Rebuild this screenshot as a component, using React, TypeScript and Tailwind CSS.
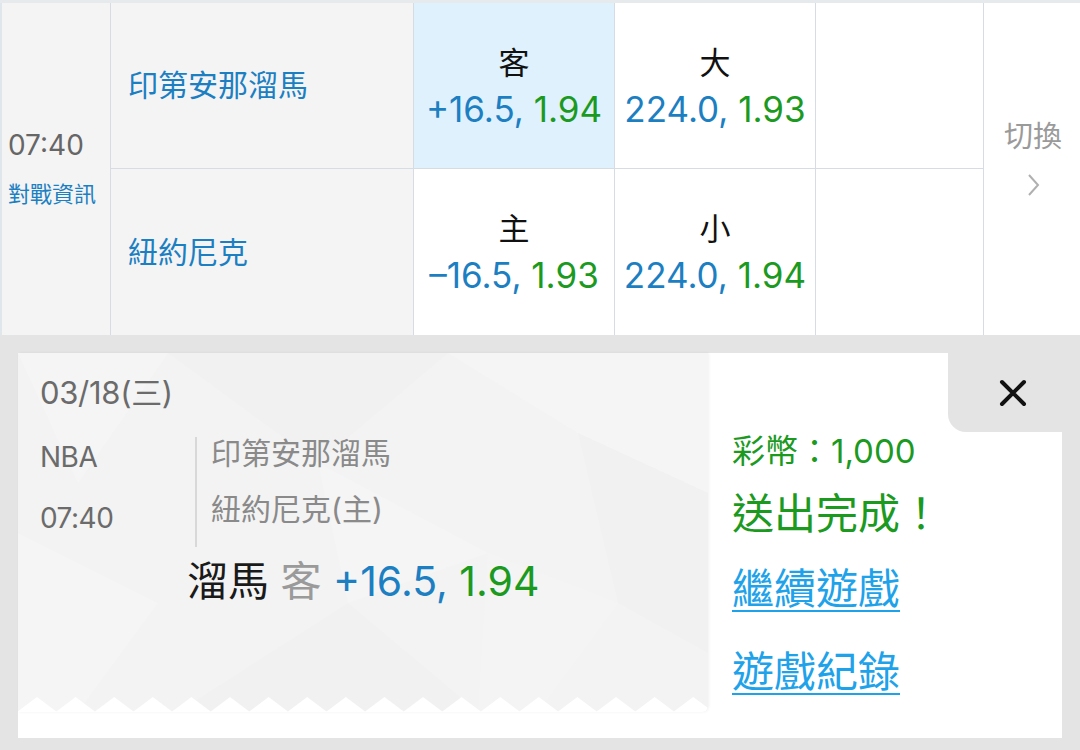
import React from 'react';

const font = { fontFamily: 'Inter, "Noto Sans CJK TC", sans-serif' };

type Odd = { label: string; line: string; price: string; active?: boolean };

const rows: { team: string; hdp: Odd; ou: Odd }[] = [
  {
    team: '印第安那溜馬',
    hdp: { label: '客', line: '+16.5', price: '1.94', active: true },
    ou: { label: '大', line: '224.0', price: '1.93' },
  },
  {
    team: '紐約尼克',
    hdp: { label: '主', line: '–16.5', price: '1.93' },
    ou: { label: '小', line: '224.0', price: '1.94' },
  },
];

function OddCell({ odd, last }: { odd: Odd; last?: boolean }) {
  return (
    <div
      className={`flex flex-col items-center justify-center pt-[2px] border-r border-[#d5dce3] ${last ? '' : 'border-b'} ${
        odd.active ? 'bg-[#dff1fc]' : 'bg-white'
      }`}
    >
      <span className="text-[31px] leading-[44px] text-[#111]">{odd.label}</span>
      <span className="text-[35px] leading-[48px]">
        <span className="text-[#1c7fc2]">{odd.line}, </span>
        <span className="text-[#1b9a1f]">{odd.price}</span>
      </span>
    </div>
  );
}

export default function App() {
  return (
    <div className="w-[1080px] h-[750px] bg-[#e4e4e4] overflow-hidden" style={font}>
      {/* odds table */}
      <div className="border-t-[3px] border-[#e6eaed] bg-white">
        <div className="grid grid-cols-[109px_303px_201px_201px_168px_98px] grid-rows-[166px_166px] border-l-[2px] border-[#dfe6ec]">
          <div className="row-span-2 flex flex-col justify-center pl-[6px] pb-[2px] bg-[#f4f4f4] border-r border-[#d5dce3]">
            <span className="text-[28px] leading-[34px] text-[#666]">07:40</span>
            <span className="mt-[18px] text-[22px] leading-[28px] text-[#1c7fc2]">對戰資訊</span>
          </div>
          {rows.map((r, i) => (
            <React.Fragment key={r.team}>
              <div
                className={`flex items-center pl-[17px] bg-[#f4f4f4] border-r border-[#d5dce3] ${
                  i === 0 ? 'border-b' : ''
                }`}
                style={{ gridRow: i + 1, gridColumn: 2 }}
              >
                <span className="text-[30px] text-[#1c7fc2]">{r.team}</span>
              </div>
              <div style={{ gridRow: i + 1, gridColumn: 3 }} className="grid">
                <OddCell odd={r.hdp} last={i === 1} />
              </div>
              <div style={{ gridRow: i + 1, gridColumn: 4 }} className="grid">
                <OddCell odd={r.ou} last={i === 1} />
              </div>
              <div
                style={{ gridRow: i + 1, gridColumn: 5 }}
                className={`bg-white border-r border-[#d5dce3] ${i === 0 ? 'border-b' : ''}`}
              />
            </React.Fragment>
          ))}
          <div
            className="row-span-2 flex flex-col items-center justify-center pb-[22px] bg-white"
            style={{ gridRow: '1 / span 2', gridColumn: 6 }}
          >
            <span className="text-[29px] leading-[38px] text-[#9a9a9a]">切換</span>
            <svg width="22" height="26" viewBox="0 0 22 26" className="mt-[16px]">
              <path d="M7 3 L16 13 L7 23" fill="none" stroke="#b0b0b0" strokeWidth="2" />
            </svg>
          </div>
        </div>
      </div>

      {/* confirmation panel */}
      <div className="mx-[18px] mt-[18px] h-[385px] flex bg-white">
        <div className="w-[690px] flex flex-col">
          <div className="relative h-[359px] bg-[#f3f3f3] rounded-br-[6px] shadow-[1px_0_3px_rgba(0,0,0,0.06)] overflow-hidden">
            <svg className="absolute inset-0" width="690" height="359" viewBox="0 0 690 359">
              <polygon points="0,0 150,0 60,130" fill="#f5f5f5" />
              <polygon points="150,0 430,0 300,110" fill="#f1f1f1" />
              <polygon points="430,0 690,0 690,140 560,80" fill="#f5f5f5" />
              <polygon points="560,80 690,140 690,300 600,250" fill="#f1f1f1" />
              <polygon points="0,180 140,250 60,359 0,359" fill="#f5f5f5" />
              <polygon points="160,359 330,250 460,359" fill="#f1f1f1" />
              <polygon points="300,110 470,200 330,250" fill="#f5f5f5" />
              <polygon points="470,200 600,250 520,359 460,359" fill="#f4f4f4" />
            </svg>
            <svg className="absolute left-0 bottom-0" width="690" height="15" viewBox="0 0 690 15">
              {Array.from({ length: 19 }).map((_, k) => {
                const x = 19 + k * 38.6;
                return <polygon key={k} points={`${x - 20},15 ${x},0 ${x + 20},15`} fill="#ffffff" />;
              })}
            </svg>
            <div className="relative pl-[22px] pt-[21px] text-[#6b6b6b]">
              <div className="text-[31px] leading-[38px] tracking-[-0.3px]">03/18(三)</div>
              <div className="mt-[25px] flex">
                <div className="w-[155px] flex flex-col">
                  <span className="text-[28px] leading-[40px] tracking-[-0.5px]">NBA</span>
                  <span className="mt-[21px] text-[28px] leading-[40px] tracking-[-0.5px]">07:40</span>
                </div>
                <div className="border-l-[2px] border-[#d8d8d8] pl-[14px] h-[110px] flex flex-col text-[#8a8a8a]">
                  <span className="text-[30px] leading-[40px] -mt-[4px]">印第安那溜馬</span>
                  <span className="mt-[16px] text-[30px] leading-[40px]">紐約尼克(主)</span>
                </div>
              </div>
              <div className="mt-[9px] ml-[147px] text-[41px] leading-[50px]">
                <span className="text-[#1a1a1a]">溜馬</span>
                <span className="text-[#9a9a9a]"> 客 </span>
                <span className="text-[#1c7fc2]">+16.5, </span>
                <span className="text-[#1b9a1f]">1.94</span>
              </div>
            </div>
          </div>
        </div>

        <div className="relative flex-1 pl-[24px] pt-[77px]">
          <div className="absolute top-0 right-0 w-[114px] h-[79px] bg-[#e4e4e4] rounded-bl-[18px] flex items-center justify-end pr-[34px]">
            <svg width="30" height="30" viewBox="0 0 30 30">
              <path d="M4 4 L26 26 M26 4 L4 26" stroke="#111" strokeWidth="4" strokeLinecap="round" />
            </svg>
          </div>
          <div className="text-[33px] leading-[42px] text-[#1b9a1f]">彩幣：1,000</div>
          <div className="mt-[17px] text-[42px] leading-[50px] text-[#1b9a1f]">送出完成！</div>
          <div className="mt-[24px] text-[42px] leading-[52px] text-[#1ea2ea] underline underline-offset-[6px] decoration-[2px]">
            繼續遊戲
          </div>
          <div className="mt-[31px] text-[42px] leading-[52px] text-[#1ea2ea] underline underline-offset-[6px] decoration-[2px]">
            遊戲紀錄
          </div>
        </div>
      </div>
    </div>
  );
}
